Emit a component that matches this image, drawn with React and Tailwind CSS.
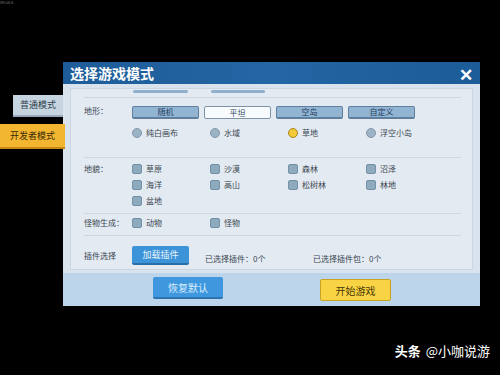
import React from 'react';

const font = { fontFamily: '"Noto Sans CJK SC", "Noto Sans", sans-serif' };

const terrainBtns = [
	{ label: '随机', active: true },
	{ label: '平坦', selected: true },
	{ label: '空岛' },
	{ label: '自定义' },
];

const radios = [
	{ label: '纯白画布' },
	{ label: '水域' },
	{ label: '草地', on: true },
	{ label: '浮空小岛' },
];

const landforms = [
	['草原', '沙漠', '森林', '沼泽'],
	['海洋', '高山', '松树林', '林地'],
	['盆地'],
];

const Check = ({ label }) => (
	<div className="w-[78px] flex items-center gap-[4px]">
		<span className="w-[10px] h-[10px] rounded-[2px] bg-[#8eaabd] border border-[#7391a6]" />
		<span className="text-[8px] leading-[11px] text-[#3a4650]">{label}</span>
	</div>
);

const Radio = ({ label, on }) => (
	<div className="w-[78px] flex items-center gap-[4px]">
		<span
			className={`w-[10px] h-[10px] rounded-full border ${
				on ? 'bg-[#f3c93a] border-[#a8841c]' : 'bg-[#9cb2c5] border-[#8298ab]'
			}`}
		/>
		<span className="text-[8px] text-[#3a4650]">{label}</span>
	</div>
);

const Row = ({ label, children, className = '' }) => (
	<div className={`flex ${className}`}>
		<div className="w-[48px] shrink-0 text-[8px] text-[#3a4650]">{label}</div>
		<div className="flex-1">{children}</div>
	</div>
);

const App = () => {
	return (
		<div className="w-[500px] h-[375px] bg-black relative overflow-hidden" style={font}>
			<div className="absolute left-0 top-0 text-[4px] text-[#777] leading-none">09:38:4</div>

			<div className="flex pt-[62px]">
				{/* side tabs */}
				<div className="w-[63px] shrink-0 pt-[33px] flex flex-col items-end gap-[7px]">
					<div className="w-[50px] h-[22px] bg-[#c7d5e1] border-b-2 border-[#98aabb] flex items-center justify-center text-[9px] text-[#2f3e4c]">
						普通模式
					</div>
					<div className="relative z-10 w-[65px] mr-[-2px] h-[25px] bg-[#f2b630] border-b-2 border-[#c98a15] flex items-center justify-center text-[9px] text-[#3b2a08]">
						开发者模式
					</div>
				</div>

				{/* dialog */}
				<div className="w-[417px] shrink-0">
					<div className="h-[22px] bg-gradient-to-r from-[#1d5c98] via-[#2366a3] to-[#1c5c98] flex items-center justify-between px-[7px]">
						<span className="text-white text-[14px] font-bold leading-none">选择游戏模式</span>
						<span className="text-white text-[17px] font-black leading-none">✕</span>
					</div>
					<div className="h-[222px] bg-[#d9e3ee] px-[7px] pt-[4px] flex flex-col">
						<div className="h-[182px] bg-[#e3eaf2] border border-[#cbd6e1] px-[13px] flex flex-col">
							<div className="flex h-[8px] pl-[49px] gap-[23px] pt-[1px]">
								<div className="w-[55px] h-[3px] rounded-sm bg-[#8fb0cc]" />
								<div className="w-[54px] h-[3px] rounded-sm bg-[#8fb0cc]" />
							</div>
							<div className="h-px bg-[#cdd7e1] w-[377px]" />

							<Row label="地形：" className="pt-[7px]">
								<div className="flex gap-[5px] mt-[1px]">
									{terrainBtns.map(b => (
										<div
											key={b.label}
											className={`w-[67px] h-[13px] rounded-[2px] flex items-center justify-center text-[8px] border ${
												b.selected
													? 'bg-[#f8fbfd] border-[#7f93a6] text-[#2f4a63]'
													: 'bg-[#92b4d3] border-[#5f7f9c] border-b-2 text-[#21405d]'
											}`}>
											{b.label}
										</div>
									))}
								</div>
								<div className="flex mt-[8px]">
									{radios.map(r => (
										<Radio key={r.label} {...r} />
									))}
								</div>
							</Row>

							<div className="h-px bg-[#cdd7e1] w-[377px] mt-[18px]" />

							<Row label="地貌：" className="pt-[5px]">
								<div className="flex flex-col gap-[5px]">
									{landforms.map((row, i) => (
										<div key={i} className="flex">
											{row.map(l => (
												<Check key={l} label={l} />
											))}
										</div>
									))}
								</div>
							</Row>

							<div className="h-px bg-[#cdd7e1] w-[377px] mt-[7px]" />

							<Row label="怪物生成：" className="pt-[3px]">
								<div className="flex">
									<Check label="动物" />
									<Check label="怪物" />
								</div>
							</Row>

							<div className="h-px bg-[#cdd7e1] w-[377px] mt-[6px]" />

							<div className="flex items-center pt-[10px]">
								<div className="w-[48px] shrink-0 text-[8px] text-[#3a4650]">插件选择</div>
								<div className="w-[57px] h-[19px] rounded-[2px] bg-[#3d93d8] border-b-2 border-[#2a6fa8] flex items-center justify-center text-[9px] text-[#e6f2fc]">
									加载插件
								</div>
								<div className="ml-[16px] mt-[7px] text-[8px] text-[#3a4650] w-[108px]">已选择插件：0个</div>
								<div className="mt-[7px] text-[8px] text-[#3a4650]">已选择插件包：0个</div>
							</div>
						</div>
						<div className="mt-[3px] h-[33px] -mx-[7px] bg-[#bdd5ea] flex items-start pt-[4px]">
							<div className="ml-[90px] w-[70px] h-[22px] rounded-[2px] bg-[#3f98dd] border-b-2 border-[#2a71ad] flex items-center justify-center text-[10px] text-[#dcefff]">
								恢复默认
							</div>
							<div className="ml-[97px] mt-[2px] w-[71px] h-[22px] rounded-[2px] bg-[#f8d444] border border-[#caa323] flex items-center justify-center text-[10px] text-[#4a3706]">
								开始游戏
							</div>
						</div>
					</div>
				</div>
			</div>

			<div className="absolute right-[10px] bottom-[18px] flex items-center text-[13px] text-white leading-none">
				<span className="font-bold mr-[5px]">头条</span>
				<span>@小咖说游</span>
			</div>
		</div>
	);
};

export default App;
